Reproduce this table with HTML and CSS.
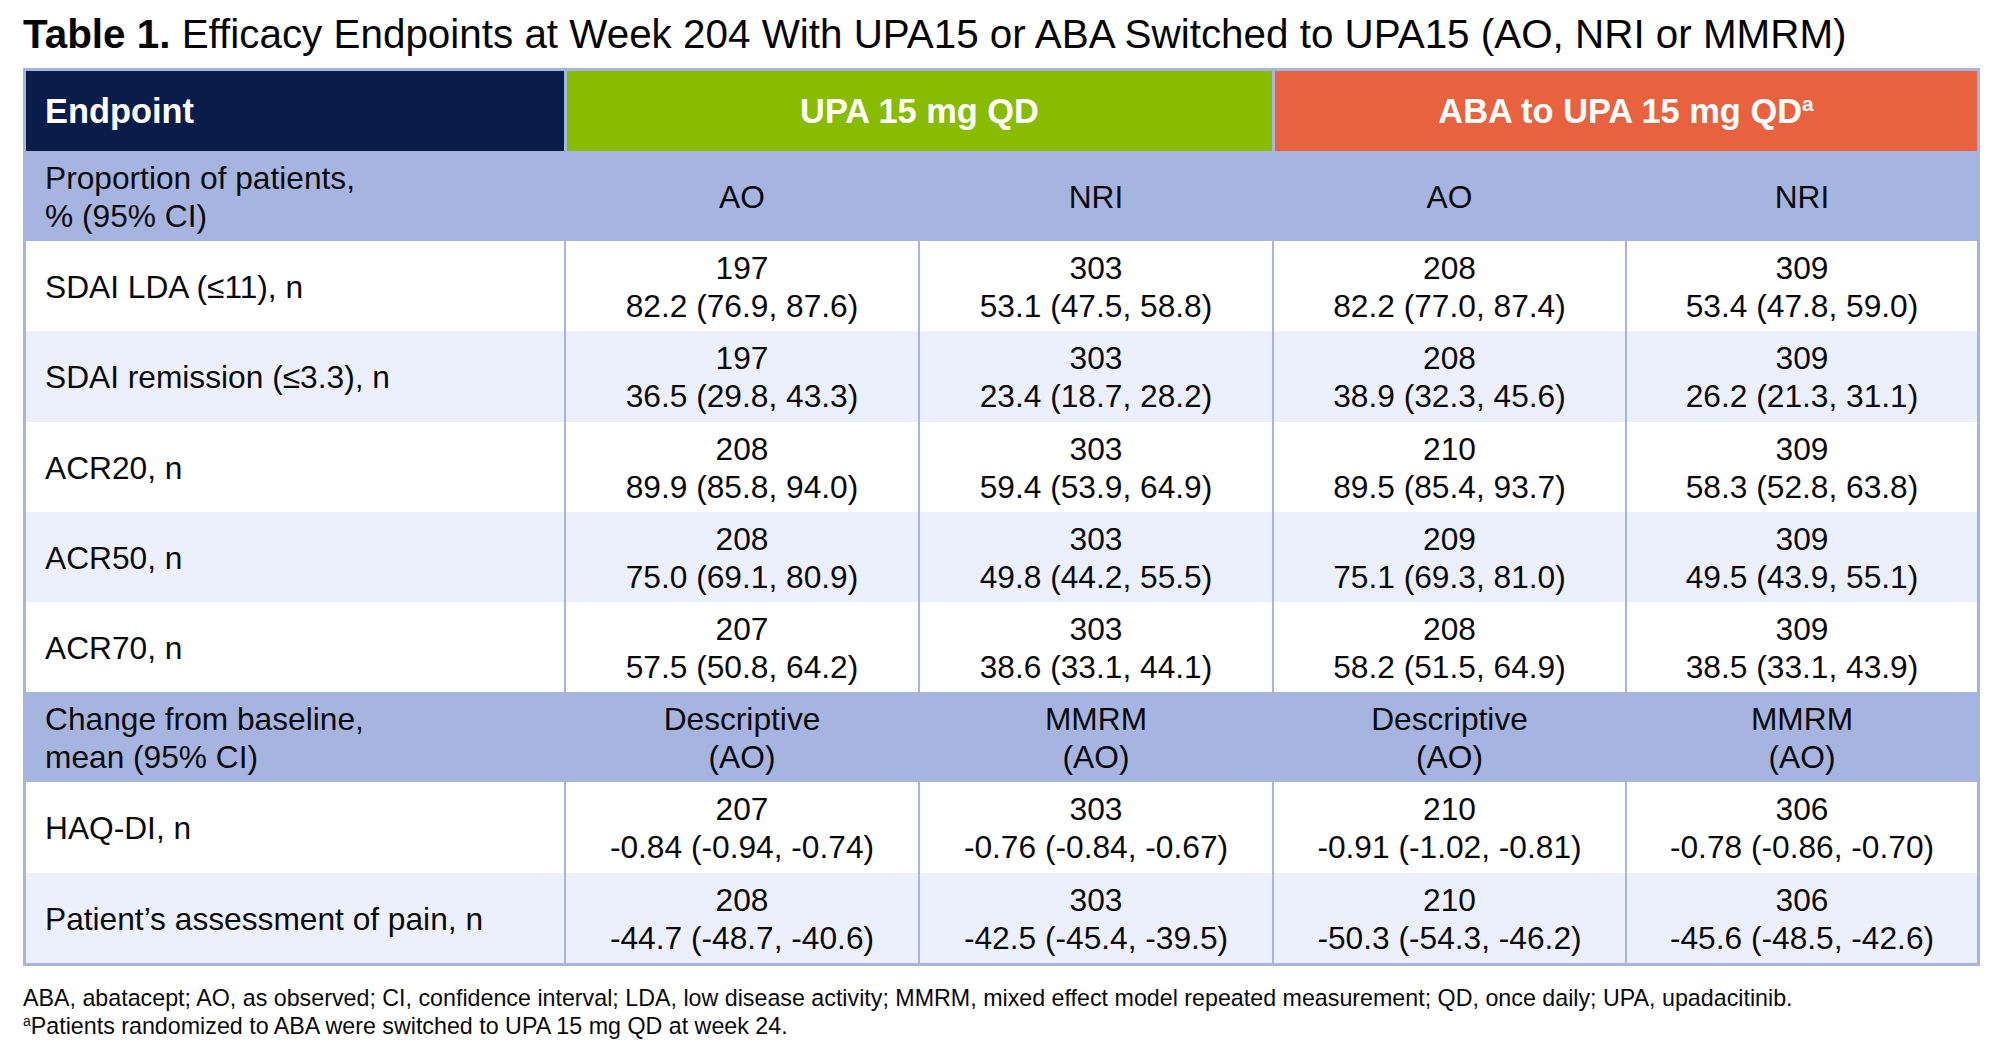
FILE: index.html
```html
<!DOCTYPE html>
<html lang="en">
<head>
<meta charset="utf-8">
<title>Table 1. Efficacy Endpoints at Week 204</title>
<link rel="stylesheet" href="styles.css">
</head>
<body>
<main class="page">
  <h1 class="title"><b>Table 1.</b> Efficacy Endpoints at Week 204 With UPA15 or ABA Switched to UPA15 (AO, NRI or MMRM)</h1>
  <table class="efficacy">
    <colgroup>
      <col class="col-end">
      <col class="col-a">
      <col class="col-a">
      <col class="col-b">
      <col class="col-c">
    </colgroup>
    <thead>
      <tr class="head">
        <th class="h-end">Endpoint</th>
        <th class="h-upa" colspan="2">UPA 15 mg QD</th>
        <th class="h-aba" colspan="2">ABA to UPA 15 mg QD<sup>a</sup></th>
      </tr>
    </thead>
    <tbody>
      <tr class="section">
        <td class="label">Proportion of patients,<br>% (95% CI)</td>
        <td>AO</td><td>NRI</td><td>AO</td><td>NRI</td>
      </tr>
      <tr class="white">
        <td class="label">SDAI LDA (≤11), n</td>
        <td>197<br>82.2 (76.9, 87.6)</td>
        <td>303<br>53.1 (47.5, 58.8)</td>
        <td>208<br>82.2 (77.0, 87.4)</td>
        <td>309<br>53.4 (47.8, 59.0)</td>
      </tr>
      <tr class="tint">
        <td class="label">SDAI remission (≤3.3), n</td>
        <td>197<br>36.5 (29.8, 43.3)</td>
        <td>303<br>23.4 (18.7, 28.2)</td>
        <td>208<br>38.9 (32.3, 45.6)</td>
        <td>309<br>26.2 (21.3, 31.1)</td>
      </tr>
      <tr class="white">
        <td class="label">ACR20, n</td>
        <td>208<br>89.9 (85.8, 94.0)</td>
        <td>303<br>59.4 (53.9, 64.9)</td>
        <td>210<br>89.5 (85.4, 93.7)</td>
        <td>309<br>58.3 (52.8, 63.8)</td>
      </tr>
      <tr class="tint">
        <td class="label">ACR50, n</td>
        <td>208<br>75.0 (69.1, 80.9)</td>
        <td>303<br>49.8 (44.2, 55.5)</td>
        <td>209<br>75.1 (69.3, 81.0)</td>
        <td>309<br>49.5 (43.9, 55.1)</td>
      </tr>
      <tr class="white">
        <td class="label">ACR70, n</td>
        <td>207<br>57.5 (50.8, 64.2)</td>
        <td>303<br>38.6 (33.1, 44.1)</td>
        <td>208<br>58.2 (51.5, 64.9)</td>
        <td>309<br>38.5 (33.1, 43.9)</td>
      </tr>
      <tr class="section">
        <td class="label">Change from baseline,<br>mean (95% CI)</td>
        <td>Descriptive<br>(AO)</td>
        <td>MMRM<br>(AO)</td>
        <td>Descriptive<br>(AO)</td>
        <td>MMRM<br>(AO)</td>
      </tr>
      <tr class="white">
        <td class="label">HAQ-DI, n</td>
        <td>207<br>-0.84 (-0.94, -0.74)</td>
        <td>303<br>-0.76 (-0.84, -0.67)</td>
        <td>210<br>-0.91 (-1.02, -0.81)</td>
        <td>306<br>-0.78 (-0.86, -0.70)</td>
      </tr>
      <tr class="tint">
        <td class="label">Patient’s assessment of pain, n</td>
        <td>208<br>-44.7 (-48.7, -40.6)</td>
        <td>303<br>-42.5 (-45.4, -39.5)</td>
        <td>210<br>-50.3 (-54.3, -46.2)</td>
        <td>306<br>-45.6 (-48.5, -42.6)</td>
      </tr>
    </tbody>
  </table>
  <div class="notes">
    <p>ABA, abatacept; AO, as observed; CI, confidence interval; LDA, low disease activity; MMRM, mixed effect model repeated measurement; QD, once daily; UPA, upadacitinib.</p>
    <p><sup>a</sup>Patients randomized to ABA were switched to UPA 15 mg QD at week 24.</p>
  </div>
</main>
</body>
</html>
```

FILE: styles.css
```css
html, body {
  margin: 0;
  padding: 0;
  background: #ffffff;
}

body {
  font-family: "Liberation Sans", Arial, Helvetica, sans-serif;
  color: #0a0a0a;
}

.page {
  padding: 11px 0 0 23px;
}

.title {
  margin: 0 0 11px 0;
  font-size: 40.4px;
  line-height: 46px;
  font-weight: normal;
  white-space: nowrap;
  color: #050505;
}

.title b {
  font-weight: bold;
}

.efficacy {
  width: 1957px;
  table-layout: fixed;
  border-collapse: separate;
  border-spacing: 0;
  border: 3px solid #a6b4e0;
  font-size: 31.7px;
  line-height: 38px;
}

.col-end { width: 538px; }
.col-a { width: 354px; }
.col-b { width: 353px; }
.col-c { width: 352px; }

.efficacy th,
.efficacy td {
  padding: 2px 0 0 0;
  text-align: center;
  vertical-align: middle;
}

.efficacy td + td {
  border-left: 2px solid #a6b4e0;
}

.head th {
  height: 80px;
  padding-top: 0;
  color: #ffffff;
  font-weight: bold;
  font-size: 34.4px;
}

.head th + th {
  border-left: 3px solid #a6b4e0;
}

.head sup {
  font-size: 21px;
  line-height: 0;
  vertical-align: 12px;
}

.efficacy .h-end {
  background: #0a1c4a;
  text-align: left;
  padding-left: 19px;
}

.h-upa {
  background: #87bc00;
}

.h-aba {
  background: #e9623f;
}

.efficacy tbody tr {
  height: 90.2px;
}

.efficacy .label {
  text-align: left;
  padding-left: 19px;
}

.section td {
  background: #a6b4e0;
}

.white td {
  background: #ffffff;
}

.tint td {
  background: #eceffc;
}

.notes {
  margin-top: 18px;
  font-size: 23.25px;
  line-height: 28px;
  color: #0a0a0a;
}

.notes p {
  margin: 0;
  white-space: nowrap;
}

.notes sup {
  font-size: 14px;
  line-height: 0;
  vertical-align: 8px;
}
```
